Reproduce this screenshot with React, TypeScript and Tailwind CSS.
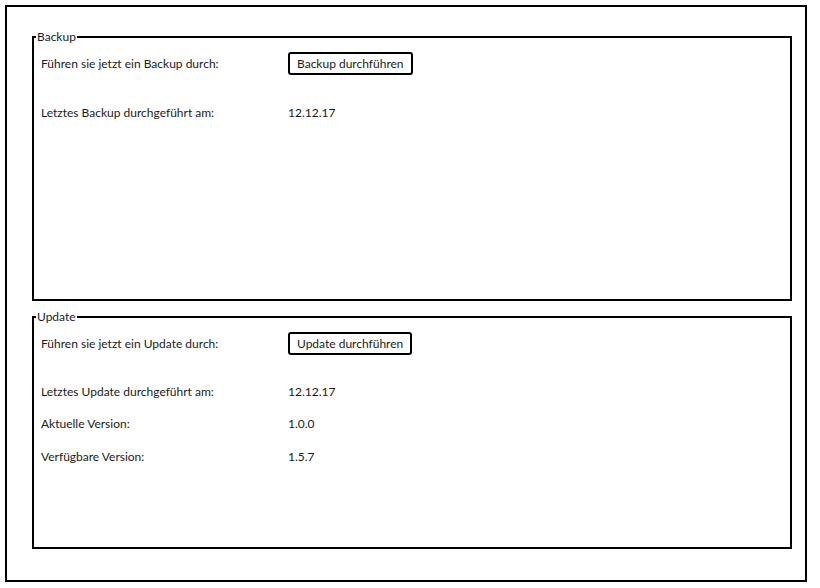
const Row = ({ label, children }: { label: string; children: React.ReactNode }) => (
  <div className="grid grid-cols-[247px_1fr] items-center h-[22px]">
    <span>{label}</span>
    <div className="flex">{children}</div>
  </div>
);

const SketchButton = ({ text }: { text: string }) => (
  <button className="h-[23px] px-[7px] border-2 border-black rounded-[3px] bg-white leading-none">
    {text}
  </button>
);

const App = () => {
  return (
    <div
      className="w-[820px] h-[588px] bg-white text-[12px] text-[#1b1b1b] p-[5px]"
      style={{ fontFamily: 'Lato, "Noto Sans", sans-serif' }}
    >
      <div className="w-[802px] h-[577px] border-2 border-black pl-[25px] pr-[13px] pt-[22px]">
        {/* Backup */}
        <fieldset className="border-2 border-black h-[272px] px-[7px]">
          <legend className="ml-[-5px] px-px leading-[16px]">Backup</legend>
          <div className="flex flex-col mt-[7px]">
            <Row label="Führen sie jetzt ein Backup durch:">
              <SketchButton text="Backup durchführen" />
            </Row>
            <div className="mt-[28px]">
              <Row label="Letztes Backup durchgeführt am:">
                <span>12.12.17</span>
              </Row>
            </div>
          </div>
        </fieldset>

        {/* Update */}
        <fieldset className="border-2 border-black h-[240px] px-[7px] mt-[8px]">
          <legend className="ml-[-5px] px-px leading-[16px]">Update</legend>
          <div className="flex flex-col gap-[10px] mt-[7px]">
            <Row label="Führen sie jetzt ein Update durch:">
              <SketchButton text="Update durchführen" />
            </Row>
            <div className="mt-[17px]">
              <Row label="Letztes Update durchgeführt am:">
                <span>12.12.17</span>
              </Row>
            </div>
            <Row label="Aktuelle Version:">
              <span>1.0.0</span>
            </Row>
            <div className="mt-px">
              <Row label="Verfügbare Version:">
                <span>1.5.7</span>
              </Row>
            </div>
          </div>
        </fieldset>
      </div>
    </div>
  );
};

export default App;
